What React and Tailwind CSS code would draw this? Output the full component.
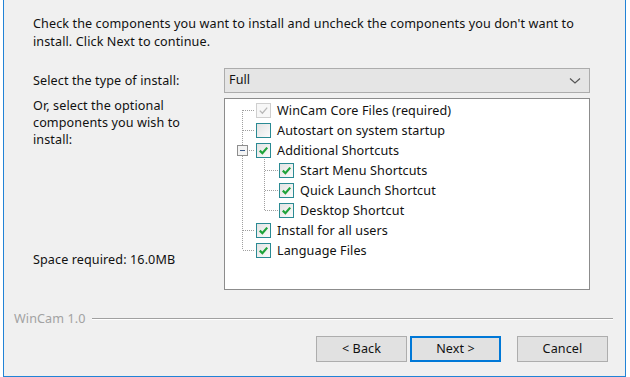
import React from 'react';

const items = [
  { label: 'WinCam Core Files (required)', level: 1, checked: true, disabled: true },
  { label: 'Autostart on system startup', level: 1, checked: false },
  { label: 'Additional Shortcuts', level: 1, checked: true },
  { label: 'Start Menu Shortcuts', level: 2, checked: true },
  { label: 'Quick Launch Shortcut', level: 2, checked: true },
  { label: 'Desktop Shortcut', level: 2, checked: true },
  { label: 'Install for all users', level: 1, checked: true },
  { label: 'Language Files', level: 1, checked: true },
];

function CheckBox({ checked, disabled }) {
  return (
    <span
      className={
        'w-[15px] h-[15px] shrink-0 border flex items-center justify-center ' +
        (disabled
          ? 'border-[#cfcfcf] bg-[#f7f7f7]'
          : 'border-[#2a8a93] bg-gradient-to-br from-[#e3e3e3] to-[#fbfbfb]')
      }
    >
      {checked && (
        <svg width="11" height="11" viewBox="0 0 11 11">
          <path
            d="M1.8 5.6 L4.4 8.2 L9.2 2.6"
            fill="none"
            stroke={disabled ? '#b8b8b8' : '#1fa33a'}
            strokeWidth={disabled ? 1.3 : 2.2}
          />
        </svg>
      )}
    </span>
  );
}

// dotted connectors + the collapse box of the tree
function TreeLines() {
  const dot = { stroke: '#a0a0a0', strokeWidth: 1, strokeDasharray: '1 1', fill: 'none' };
  const lvl1 = [11, 31, 131, 151];
  const lvl2 = [71, 91, 111];
  return (
    <svg className="absolute left-0 top-0" width="80" height="170">
      <path d="M17.5 11 V151" style={dot} />
      {lvl1.map((y) => (
        <path key={y} d={`M18 ${y + 0.5} H30`} style={dot} />
      ))}
      <path d="M22 51.5 H30" style={dot} />
      <path d="M39.5 58 V111" style={dot} />
      {lvl2.map((y) => (
        <path key={y} d={`M40 ${y + 0.5} H53`} style={dot} />
      ))}
      <rect x="12.5" y="46.5" width="10" height="10" fill="#f4f4f4" stroke="#8e8e8e" />
      <path d="M15 51.5 H20" stroke="#3c5a8a" strokeWidth="1" />
    </svg>
  );
}

export default function App() {
  return (
    <div
      className="w-[630px] h-[377px] bg-white flex text-[12.6px] tracking-[0.1px] text-[#111]"
      style={{ fontFamily: '"Noto Sans", "Open Sans", sans-serif' }}
    >
      <div className="ml-[3px] w-[623px] h-[377px] border-l border-r border-b border-[#2283d6] bg-[#f0f0f0] flex flex-col">
        {/* description */}
        <p className="pl-[29px] pt-[15px] leading-[18px] whitespace-nowrap">
          Check the components you want to install and uncheck the components you don't want to
          <br />
          install. Click Next to continue.
        </p>

        {/* main grid */}
        <div className="mt-[17px] pl-[29px] grid grid-cols-[191px_366px] grid-rows-[25px_192px] gap-y-[5px]">
          <div className="flex items-center leading-[17px]">Select the type of install:</div>
          <div className="border border-[#acacac] bg-[#e5e5e5] flex items-center justify-between pl-[4px] pr-[8px]">
            <span>Full</span>
            <svg width="12" height="8" viewBox="0 0 12 8">
              <path d="M1 1.5 L6 6 L11 1.5" fill="none" stroke="#555" strokeWidth="1.2" />
            </svg>
          </div>

          <div className="flex flex-col justify-between leading-[17px] pb-[22px] -mt-[1px]">
            <p>
              Or, select the optional
              <br />
              components you wish to
              <br />
              install:
            </p>
            <p>Space required: 16.0MB</p>
          </div>
          <div className="relative border border-[#8c8c8c] bg-white pt-[1px]">
            <TreeLines />
            {items.map((it) => (
              <div
                key={it.label}
                className={
                  'relative h-[20px] flex items-center gap-[6px] ' +
                  (it.level === 1 ? 'pl-[31px]' : 'pl-[54px]')
                }
              >
                <CheckBox checked={it.checked} disabled={it.disabled} />
                <span className="leading-[17px] whitespace-nowrap">{it.label}</span>
              </div>
            ))}
          </div>
        </div>

        {/* branding line */}
        <div className="mt-[20px] pl-[10px] pr-[12px] flex items-center gap-[6px] text-[#a2a2a2]">
          <span className="leading-[17px]">WinCam 1.0</span>
          <div className="flex-1 border-t border-[#a0a0a0] border-b-white border-b" />
        </div>

        {/* buttons */}
        <div className="mt-[9px] pl-[312px] flex">
          <button className="w-[91px] h-[26px] border border-[#adadad] bg-[#e1e1e1] leading-none">
            &lt; Back
          </button>
          <button className="ml-[3px] w-[91px] h-[26px] border border-[#0078d7] shadow-[inset_0_0_0_1px_#0078d7] bg-[#e1e1e1] leading-none">
            Next &gt;
          </button>
          <button className="ml-[16px] w-[91px] h-[26px] border border-[#adadad] bg-[#e1e1e1] leading-none">
            Cancel
          </button>
        </div>
      </div>
    </div>
  );
}
